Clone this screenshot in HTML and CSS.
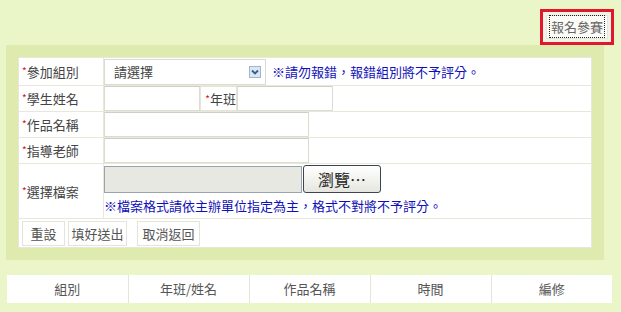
FILE: index.html
```html
<!DOCTYPE html>
<html lang="zh-Hant">
<head>
  <meta charset="UTF-8" />
  <title>報名參賽</title>
  <link rel="stylesheet" href="styles.css">
</head>
<body>
  <div class="top-bar">
    <div class="highlight">
      <button class="join-btn"><span>報名參賽</span></button>
    </div>
  </div>

  <div class="panel">
    <table class="form-table">
      <tr class="row-first">
        <td class="label"><em>*</em>參加組別</td>
        <td>
          <div class="field">
            <div class="select-box">
              <span>請選擇</span>
              <svg width="12" height="12" viewBox="0 0 12 12">
                <rect x="0.5" y="0.5" width="11" height="11" fill="#dbe6f4" stroke="#9fb4cf"/>
                <path d="M3 4.5 L6 7.5 L9 4.5" fill="none" stroke="#3a5c8a" stroke-width="1.8"/>
              </svg>
            </div>
            <span class="note">※請勿報錯，報錯組別將不予評分。</span>
          </div>
        </td>
      </tr>
      <tr>
        <td class="label"><em>*</em>學生姓名</td>
        <td>
          <div class="field">
            <input class="input short" type="text">
            <span class="inline-label"><em>*</em>年班</span>
            <input class="input short" type="text">
          </div>
        </td>
      </tr>
      <tr>
        <td class="label"><em>*</em>作品名稱</td>
        <td><input class="input long" type="text"></td>
      </tr>
      <tr>
        <td class="label"><em>*</em>指導老師</td>
        <td><input class="input long" type="text"></td>
      </tr>
      <tr class="row-file">
        <td class="label"><em>*</em>選擇檔案</td>
        <td>
          <div class="file-line">
            <span class="file-path"></span>
            <button class="browse-btn">瀏覽…</button>
          </div>
          <p class="note file-note">※檔案格式請依主辦單位指定為主，格式不對將不予評分。</p>
        </td>
      </tr>
      <tr class="row-actions">
        <td colspan="2">
          <div class="actions">
            <button class="flat-btn reset">重設</button>
            <button class="flat-btn submit">填好送出</button>
            <button class="flat-btn cancel">取消返回</button>
          </div>
        </td>
      </tr>
    </table>
  </div>

  <table class="list-table">
    <tr>
      <th>組別</th>
      <th>年班/姓名</th>
      <th>作品名稱</th>
      <th>時間</th>
      <th>編修</th>
    </tr>
  </table>
</body>
</html>
```

FILE: styles.css
```css
body {
  margin: 0;
  background: #ebf6c8;
  font-family: "Noto Sans CJK TC", "Noto Sans", sans-serif;
  font-size: 13px;
  color: #333;
}
em {
  font-style: normal;
  color: #d0101a;
  font-size: 10px;
  vertical-align: 2px;
}
.top-bar {
  display: flex;
  justify-content: flex-end;
  padding: 9px 7px 0 0;
  height: 45px;
  box-sizing: border-box;
}
.highlight {
  border: 3px solid #e0182c;
  padding: 3px;
  background: #f2f2e6;
  display: flex;
  height: 36px;
  box-sizing: border-box;
}
.join-btn {
  font-family: inherit;
  font-size: 13px;
  color: #666;
  background: #fbfbf7;
  border: 1px solid #e6e6dc;
  padding: 0 3px;
  line-height: 16px;
  height: 24px;
}
.join-btn span {
  outline: 1px dotted #222;
  padding: 1px 1px;
}
.panel {
  background: #dfebae;
  margin: 0 0 0 6px;
  width: 598px;
  padding: 12px;
  box-sizing: border-box;
}
.form-table {
  width: 100%;
  border-collapse: collapse;
  background: #fff;
}
.form-table td {
  border: 1px solid #e8e8da;
  padding: 0;
  height: 25px;
  line-height: 16px;
}
.form-table .row-first td {
  height: 27px;
}
.form-table td.label {
  width: 81px;
  padding-left: 3px;
  font-size: 13px;
  color: #444;
}
.field {
  display: flex;
  align-items: center;
}
.select-box {
  width: 162px;
  height: 26px;
  box-sizing: border-box;
  border: 1px solid #dcdcd4;
  display: flex;
  align-items: center;
  justify-content: space-between;
  padding: 0 4px 0 9px;
  color: #444;
}
.note {
  color: #1010b8;
  margin-left: 6px;
  font-size: 13px;
}
.input {
  height: 25px;
  box-sizing: border-box;
  border: 1px solid #dcdcd2;
  border-top-color: #cfcfc6;
  background: #fff;
  display: block;
  margin: 0;
}
.input.short {
  width: 96px;
}
.input.long {
  width: 205px;
}
.inline-label {
  width: 37px;
  height: 25px;
  box-sizing: border-box;
  border: 1px solid #e4e4d8;
  display: flex;
  align-items: center;
  justify-content: flex-end;
  font-size: 13px;
  color: #444;
}
.form-table .row-file td {
  height: 54px;
}
.file-line {
  display: flex;
  align-items: center;
  padding-top: 1px;
}
.file-path {
  width: 198px;
  height: 27px;
  box-sizing: border-box;
  background: #e8e8e2;
  border: 1px solid #9aa4b0;
}
.browse-btn {
  width: 78px;
  height: 28px;
  margin-left: 1px;
  border: 1px solid #3c4550;
  border-radius: 3px;
  background: linear-gradient(#ffffff, #e6e6e0);
  font-family: inherit;
  font-size: 16px;
  font-weight: normal;
  color: #222;
  padding: 0;
  line-height: 20px;
}
.file-note {
  margin: 5px 0 4px 0;
}
.actions {
  display: flex;
  gap: 3px;
  padding: 2px 3px 1px;
}
.flat-btn {
  height: 25px;
  background: #fff;
  border: 1px solid #e4e4da;
  font-family: inherit;
  font-size: 13px;
  color: #555;
  padding: 0;
}
.flat-btn.reset {
  width: 43px;
}
.flat-btn.submit {
  width: 59px;
}
.flat-btn.cancel {
  width: 63px;
  margin-left: 7px;
}
.list-table {
  margin: 15px 0 0 7px;
  width: 605px;
  border-collapse: collapse;
  background: #fff;
}
.list-table th {
  font-weight: normal;
  color: #555;
  height: 28px;
  padding: 0;
  width: 20%;
  border-left: 1px solid #e6e6d8;
  line-height: 16px;
}
.list-table th:first-child {
  border-left: none;
}
```
